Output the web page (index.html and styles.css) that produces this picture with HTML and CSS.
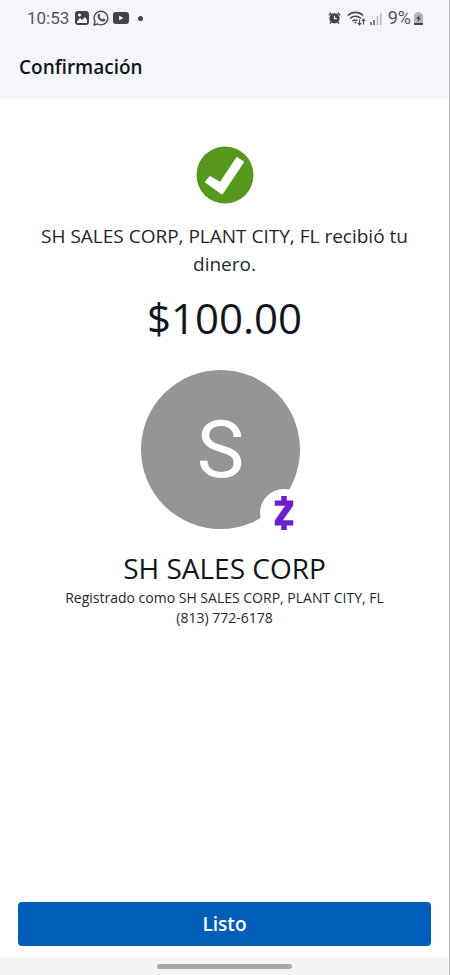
FILE: index.html
```html
<!DOCTYPE html>
<html lang="es">
<head>
<meta charset="utf-8">
<meta name="viewport" content="width=device-width, initial-scale=1">
<title>Confirmación</title>
<link rel="stylesheet" href="styles.css">
</head>
<body>
<div class="screen">
  <div class="status">
    <div class="status-group">
      <span class="clock">10:53</span>
      <svg class="icon-image" width="14" height="14" viewBox="0 0 14 14" aria-hidden="true"><rect width="14" height="14" rx="3" fill="#424346"/><path d="M2 10.500 5 7l2 2 3-3 2 3v3H2z" fill="#f5f6fb"/><circle cx="4.500" cy="4" r="1.500" fill="#f5f6fb"/></svg>
      <svg width="16" height="16" viewBox="0 0 16 16" aria-hidden="true"><path d="M1 15l1-3.700A6.800 6.800 0 1 1 4.700 14z" fill="none" stroke="#4b4c4f" stroke-width="1.400" stroke-linejoin="round"/><path d="M5.500 4c.5-.4 1-.2 1.200.3l.5 1.200c.1.500-.7 1-.6 1.300.5 1.200 1.400 2 2.700 2.600.4.100.9-1 1.300-.9l1.500.8c.5.300.1 1.500-.5 1.900-3 1.600-8.400-3.400-6.900-6.300.2-.4.500-.7.800-.9z" fill="#4b4c4f"/></svg>
      <svg width="16" height="12" viewBox="0 0 17 12" preserveAspectRatio="none" aria-hidden="true"><rect width="17" height="12" rx="3" fill="#424346"/><path d="M6.500 3.500v5l4.500-2.500z" fill="#f5f6fb"/></svg>
      <span class="dot"></span>
    </div>
    <div class="status-group">
      <svg width="13" height="14" viewBox="0 0 14 14" aria-hidden="true"><circle cx="7" cy="7.500" r="5.500" fill="#424346"/><path d="M1 4l2.500-2.500M13 4l-2.500-2.500M3.500 11.500l-1.500 1.500M10.500 11.500l1.500 1.500" stroke="#424346" stroke-width="1.600"/><path d="M7 4.500v3.200h2.500" fill="none" stroke="#f5f6fb" stroke-width="1.200"/></svg>
      <svg class="icon-wifi" width="19" height="15" viewBox="0 0 19 15" aria-hidden="true"><path d="M.8 4.500a11 11 0 0 1 15.400 0M3 7.500a8 8 0 0 1 11 0M5.500 10.200a4.500 4.500 0 0 1 5-.7" fill="none" stroke="#4b4c4f" stroke-width="1.600"/><circle cx="8.500" cy="11.500" r="1" fill="#4b4c4f"/><path d="M12.500 8.500v5M10.800 11.800l1.700 2 1.700-2M16.500 13.500v-5M14.900 10.200l1.600-2 1.600 2" fill="none" stroke="#4b4c4f" stroke-width="1.100"/></svg>
      <svg width="12" height="13" viewBox="0 0 12 13" aria-hidden="true"><path d="M1 10v3M4 8v5" stroke="#55565a" stroke-width="1.500"/><path d="M7.500 4v9M10.800 1v12" stroke="#b9babd" stroke-width="1.500"/></svg>
      <span class="percent">9%</span>
      <svg class="icon-battery" width="9" height="13" viewBox="0 0 9 13" aria-hidden="true"><path d="M2.500 0h4v1.500h1.500q1 0 1 1V11H0V2.500q0-1 1-1h1.500z" fill="#b5b6b9"/><path d="M0 11h9v1q0 1-1 1H1q-1 0-1-1z" fill="#424346"/><path d="M5.500 2.800 2.200 7h2L3.700 10 7 5.800H5z" fill="#424346"/></svg>
    </div>
  </div>
  <header class="header"><h1>Confirmación</h1></header>
  <main class="content">
    <svg class="check" width="58" height="58" viewBox="0 0 58 58" role="img" aria-label="Completado"><circle cx="29" cy="29" r="28.500" fill="#56981e"/><path d="M10 36 14 31 24.500 37 41 12 47 16 26 47.500z" fill="#fff" stroke="#fff" stroke-width="2" stroke-linejoin="round"/></svg>
    <p class="message">SH SALES CORP, PLANT CITY, FL recibió tu dinero.</p>
    <p class="amount">$100.00</p>
    <div class="avatar">
      <div class="avatar-face">S</div>
      <span class="badge"><svg width="20" height="34" viewBox="0 0 20 34" role="img" aria-label="Zelle"><path d="M7.500 0h5v4.800h6.500v4.700L8.500 24.500H19v4.700h-6.500V34h-5v-4.800H1v-4.700L11.500 9.500H1V4.800h6.500z" fill="#6d1ed4" stroke="#6d1ed4" stroke-width=".5"/></svg></span>
    </div>
    <h2 class="name">SH SALES CORP</h2>
    <p class="detail">Registrado como SH SALES CORP, PLANT CITY, FL</p>
    <p class="detail">(813) 772-6178</p>
  </main>
  <footer class="actions"><button class="done" type="button">Listo</button></footer>
  <div class="nav"><span class="handle"></span></div>
</div>
</body>
</html>
```
FILE: styles.css
```css
* { box-sizing: border-box; }
body {
  margin: 0;
  background: #fff;
  color: #11151c;
  font-family: "Open Sans", sans-serif;
}
h1, h2, p { margin: 0; }
svg { display: block; flex: none; }
.screen {
  display: flex;
  flex-direction: column;
  min-height: 100vh;
  border-right: 1px solid #b4b5b8;
}
.status {
  display: flex;
  justify-content: space-between;
  align-items: center;
  height: 36px;
  padding: 0 26px 0 27px;
  background: #f5f6fb;
  color: #55565a;
  font: 17px/20px Roboto, sans-serif;
}
.status-group { display: flex; align-items: center; gap: 4px; }
.icon-image { margin-left: 2px; }
.dot { width: 5px; height: 5px; margin-left: 5px; border-radius: 50%; background: #424346; }
.icon-wifi { margin-left: 2px; }
.percent { margin-left: 2px; font-size: 18px; }
.icon-battery { margin-left: -1px; }
.header { padding: 17px 19px 18px; background: #f5f6fb; }
.header h1 { font-size: 19px; line-height: 28px; font-weight: 600; }
.content {
  display: flex;
  flex: 1;
  flex-direction: column;
  align-items: center;
  padding: 47px 24px 24px;
  text-align: center;
}
.message { margin-top: 18px; font-size: 19px; line-height: 28px; color: #24272c; }
.amount { margin-top: 12px; font-size: 42px; line-height: 56px; }
.avatar {
  position: relative;
  width: 167px;
  height: 167px;
  margin-top: 24px;
}
.avatar-face {
  width: 159px;
  height: 159px;
  border-radius: 50%;
  background: #959595;
  color: #fff;
  font: 80px/161px Roboto, sans-serif;
}
.badge {
  position: absolute;
  right: 0;
  bottom: 0;
  display: flex;
  align-items: center;
  justify-content: center;
  width: 48px;
  height: 48px;
  border-radius: 50%;
  background: #fff;
}
.name { margin-top: 11px; font-size: 28px; line-height: 40px; font-weight: 400; }
.detail { font-size: 14px; line-height: 20px; color: #24272c; }
.actions { padding: 0 18px 11px; }
.done {
  display: block;
  width: 100%;
  height: 44px;
  padding: 0;
  border: 0;
  border-radius: 4px;
  background: #005eb8;
  color: #fff;
  font: 600 19px/28px "Open Sans", sans-serif;
}
.nav { display: flex; justify-content: center; height: 18px; padding-top: 7px; background: #f5f5f7; }
.handle { width: 30%; height: 5px; border-radius: 3px; background: #a9a9ab; }
```
